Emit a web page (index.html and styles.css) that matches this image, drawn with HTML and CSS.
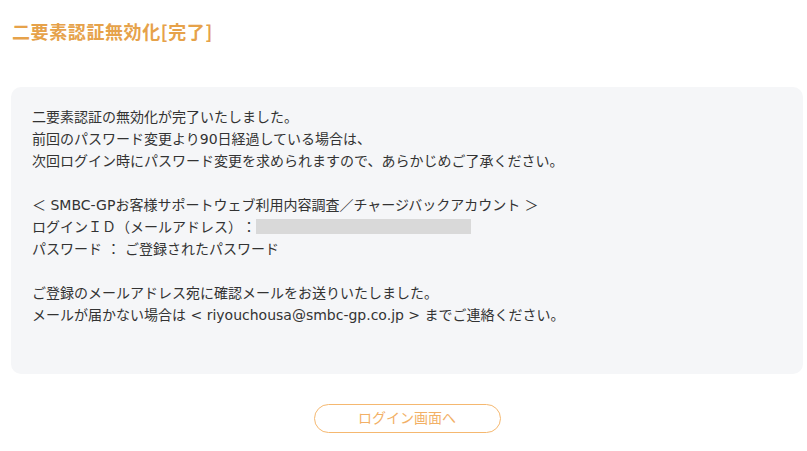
FILE: index.html
```html
<!DOCTYPE html>
<html lang="ja">
<head>
    <meta charset="UTF-8">
    <title>二要素認証無効化[完了]</title>
    <link rel="stylesheet" href="styles.css">
</head>
<body>
    <div class="page">
        <h1 class="page-title">二要素認証無効化[完了]</h1>
        <div class="notice">
            <p>二要素認証の無効化が完了いたしました。<br>
            前回のパスワード変更より90日経過している場合は、<br>
            次回ログイン時にパスワード変更を求められますので、あらかじめご了承ください。</p>
            <p>＜ SMBC-GPお客様サポートウェブ利用内容調査／チャージバックアカウント ＞<br>
            ログインＩＤ（メールアドレス）：<span class="masked"></span><br>
            パスワード ： ご登録されたパスワード</p>
            <p>ご登録のメールアドレス宛に確認メールをお送りいたしました。<br>
            メールが届かない場合は &lt; riyouchousa@smbc-gp.co.jp &gt; までご連絡ください。</p>
        </div>
        <div class="actions">
            <a class="login-button" href="#">ログイン画面へ</a>
        </div>
    </div>
</body>
</html>
```

FILE: styles.css
```css
body {
    margin: 0;
    font-family: "DejaVu Sans", "Noto Sans CJK JP", sans-serif;
    color: #333;
    background-color: #fff;
    text-spacing-trim: space-all;
}
.page {
    padding: 20px 4px 18px 11px;
}
.page-title {
    margin: 0 0 0 1px;
    font-family: "Noto Sans CJK JP", sans-serif;
    font-size: 18px;
    line-height: 22px;
    font-weight: bold;
    letter-spacing: 0.6px;
    color: #e6a24a;
}
.notice {
    margin-top: 45px;
    padding: 19px 21px 48px 21px;
    background-color: #f5f6f8;
    border-radius: 10px;
    font-size: 14px;
    line-height: 22px;
}
.notice p {
    margin: 0 0 22px 0;
}
.notice p:last-child {
    margin-bottom: 0;
}
.masked {
    display: inline-block;
    width: 215px;
    height: 15px;
    vertical-align: -2px;
    background-color: #d9d9d9;
}
.actions {
    display: flex;
    justify-content: center;
    margin-top: 30px;
}
.login-button {
    display: block;
    width: 185px;
    height: 27px;
    line-height: 27px;
    text-align: center;
    border: 1px solid #f5b870;
    border-radius: 15px;
    color: #f2b066;
    font-size: 14px;
    text-decoration: none;
}
```
